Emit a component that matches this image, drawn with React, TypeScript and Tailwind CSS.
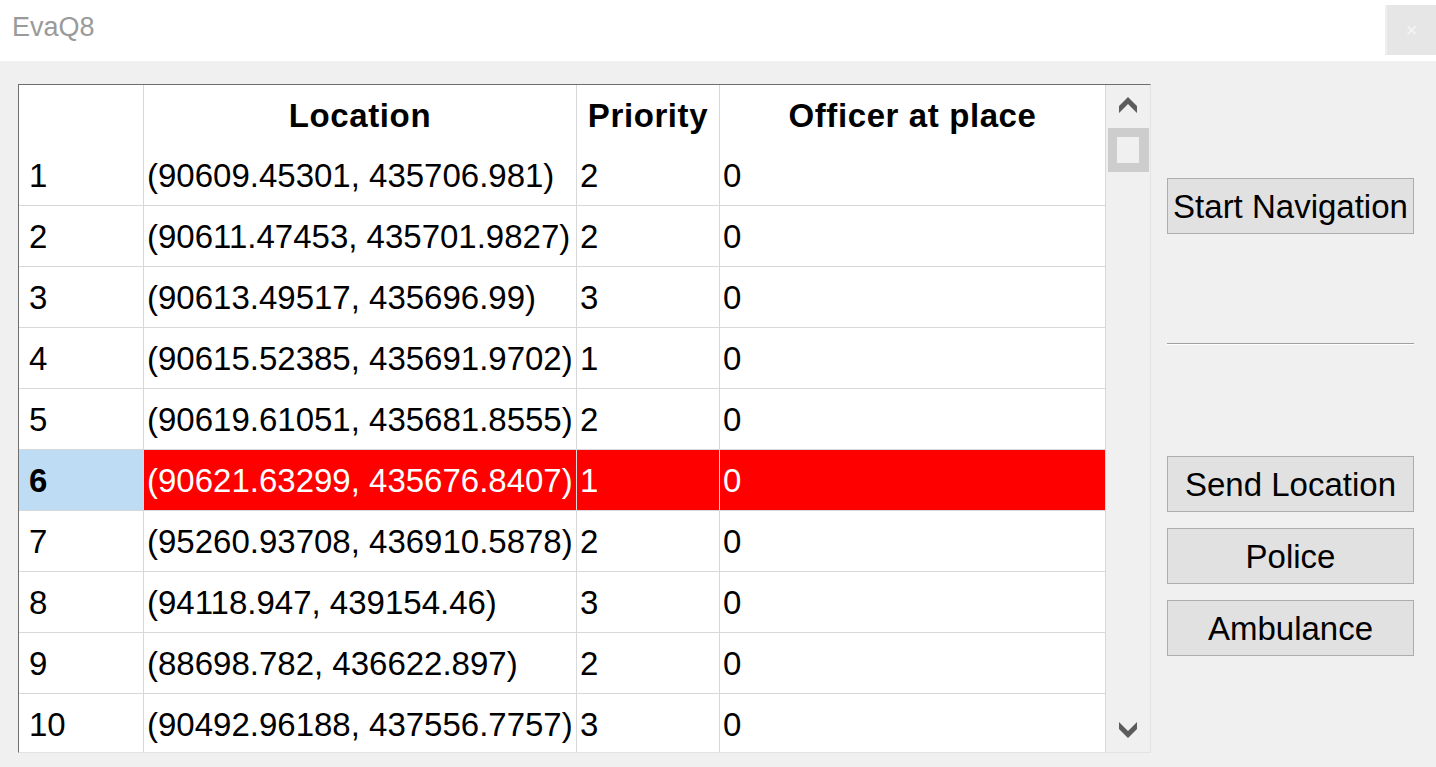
import React from "react";

const rows = [
  { id: 1, loc: "(90609.45301, 435706.981)", pri: 2, off: 0 },
  { id: 2, loc: "(90611.47453, 435701.9827)", pri: 2, off: 0 },
  { id: 3, loc: "(90613.49517, 435696.99)", pri: 3, off: 0 },
  { id: 4, loc: "(90615.52385, 435691.9702)", pri: 1, off: 0 },
  { id: 5, loc: "(90619.61051, 435681.8555)", pri: 2, off: 0 },
  { id: 6, loc: "(90621.63299, 435676.8407)", pri: 1, off: 0 },
  { id: 7, loc: "(95260.93708, 436910.5878)", pri: 2, off: 0 },
  { id: 8, loc: "(94118.947, 439154.46)", pri: 3, off: 0 },
  { id: 9, loc: "(88698.782, 436622.897)", pri: 2, off: 0 },
  { id: 10, loc: "(90492.96188, 437556.7757)", pri: 3, off: 0 },
];

const SELECTED = 6;

// scrollbar arrow, drawn filled so it stays chunky like the Qt one
function Chevron({ up }: { up?: boolean }) {
  return (
    <svg width={18} height={16} className="shrink-0" viewBox="0 0 18 16">
      <polygon
        points={up ? "9,0 18,9 18,16 9,7 0,16 0,9" : "9,16 18,7 18,0 9,9 0,0 0,7"}
        fill="#5c5c5c"
      />
    </svg>
  );
}

function Button({ label }: { label: string }) {
  return (
    <button className="h-[56px] w-full border border-[#adadad] bg-[#e1e1e1] text-[33px] leading-none text-black">
      {label}
    </button>
  );
}

const cell = "flex items-center border-r border-[#d8d8d8] pt-[2px]";

export default function App() {
  return (
    <div className="flex h-[767px] w-[1436px] flex-col overflow-hidden bg-[#f0f0f0] font-['Liberation_Sans',Arial,sans-serif]">
      {/* Title bar */}
      <div className="flex h-[61px] items-start justify-between bg-white">
        <div className="pl-[12px] pt-[14px] text-[27px] leading-none text-[#9a9a9a]">EvaQ8</div>
        <div className="mt-[5px] flex h-[50px] w-[51px] items-center justify-center border-l-2 border-[#efefef] bg-[#e6e6e6] text-[20px] text-[#f6f6f6]">
          ×
        </div>
      </div>

      <div className="flex pl-[18px] pt-[23px]">
        {/* Table */}
        <div className="flex h-[669px] w-[1133px] overflow-hidden border border-t-[#6e6e6e] border-l-[#6e6e6e] border-r-[#e3e3e3] border-b-[#e3e3e3] bg-white text-[33px] text-black">
          <div className="flex w-[1087px] flex-col">
            <div className="flex h-[60px] shrink-0 items-center font-bold tracking-[0.6px]">
              <div className="h-full w-[125px] border-r border-[#d8d8d8]" />
              <div className="flex h-full w-[433px] items-center justify-center border-r border-[#d8d8d8] pt-[2px]">Location</div>
              <div className="flex h-full w-[143px] items-center justify-center border-r border-[#d8d8d8] pt-[2px]">Priority</div>
              <div className="flex h-full w-[386px] items-center justify-center border-r border-[#d8d8d8] pt-[2px]">Officer at place</div>
            </div>
            {rows.map((r) => {
              const sel = r.id === SELECTED;
              const data = sel ? "bg-[#ff0000] pl-[3px] text-white" : "pl-[3px]";
              return (
                <div key={r.id} className="flex h-[61px] shrink-0 border-b border-[#d8d8d8]">
                  <div className={`${cell} w-[125px] pl-[10px] ${sel ? "bg-[#bedcf3] font-bold" : ""}`}>{r.id}</div>
                  <div className={`${cell} w-[433px] ${data}`}>{r.loc}</div>
                  <div className={`${cell} w-[143px] ${data}`}>{r.pri}</div>
                  <div className={`${cell} w-[386px] ${data}`}>{r.off}</div>
                </div>
              );
            })}
          </div>
          {/* Scrollbar */}
          <div className="flex w-[44px] flex-col items-center bg-[#f0f0f0]">
            <div className="mt-[12px] flex h-[16px] w-[18px] items-center justify-center">
              <Chevron up />
            </div>
            <div className="mt-[15px] flex h-[44px] w-[41px] items-center justify-center bg-[#cdcdcd]">
              <div className="h-[26px] w-[22px] bg-[#f0f0f0]" />
            </div>
            <div className="flex-1" />
            <div className="mb-[14px] flex h-[16px] w-[18px] items-center justify-center">
              <Chevron />
            </div>
          </div>
        </div>

        {/* Right panel */}
        <div className="ml-[16px] flex w-[247px] flex-col pt-[94px]">
          <Button label="Start Navigation" />
          <div className="mt-[109px] h-px w-full bg-[#a0a0a0]" />
          <div className="h-px w-full bg-white" />
          <div className="mt-[111px] flex flex-col gap-[16px]">
            <Button label="Send Location" />
            <Button label="Police" />
            <Button label="Ambulance" />
          </div>
        </div>
      </div>
    </div>
  );
}
